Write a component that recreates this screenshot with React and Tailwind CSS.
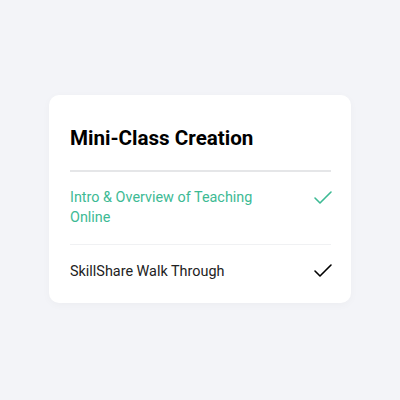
import { Check } from "lucide-react";

const items = [
  { title: "Intro & Overview of Teaching Online", active: true },
  { title: "SkillShare Walk Through", active: false },
];

export default function App() {
  return (
    <div
      className="w-[400px] h-[400px] bg-[#f3f4f8] flex items-center justify-center"
      style={{ fontFamily: "Roboto, 'Noto Sans', sans-serif" }}
    >
      <div className="w-[302px] bg-white rounded-[10px] pl-[21px] pr-[20px] pt-[29px] pb-[6px] mt-[-3px] shadow-[0_2px_8px_rgba(0,0,0,0.03)]">
        <h1 className="text-[20.6px] font-bold text-black leading-[28px] pb-[18px] border-b-2 border-[#e5e6e8]">
          Mini-Class Creation
        </h1>
        <ul>
          {items.map((item, i) => (
            <li
              key={i}
              className={`flex items-start justify-between ${
                i < items.length - 1
                  ? "pt-[16px] pb-[16px] border-b border-[#f0f1f3]"
                  : "pt-[17px] pb-[14px]"
              }`}
            >
              <span
                className={`text-[14.4px] leading-[20px] w-[210px] ${
                  item.active ? "text-[#3dba94]" : "text-[#222]"
                }`}
              >
                {item.title}
              </span>
              <Check
                size={24}
                strokeWidth={1.6}
                className={`mr-[-4px] ${
                  item.active ? "mt-[-2px] text-[#3dba94]" : "mt-[-3px] text-black"
                }`}
              />
            </li>
          ))}
        </ul>
      </div>
    </div>
  );
}
